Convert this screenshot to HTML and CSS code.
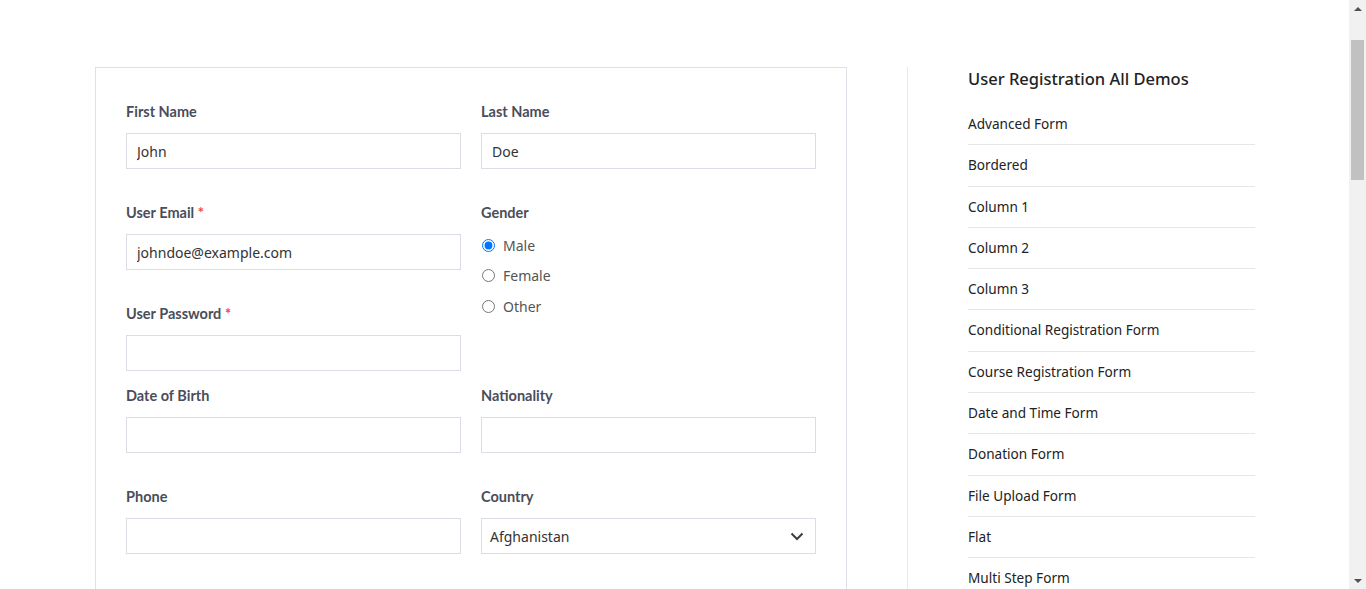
FILE: index.html
```html
<!DOCTYPE html>
<html lang="en">
<head>
<meta charset="utf-8">
<title>User Registration</title>
<link rel="stylesheet" href="styles.css">
</head>
<body>
<div class="page">
  <form class="reg-form">
    <div class="row">
      <div class="field">
        <label class="lbl">First Name</label>
        <input class="inp" type="text" value="John">
      </div>
      <div class="field">
        <label class="lbl">Last Name</label>
        <input class="inp" type="text" value="Doe">
      </div>
    </div>
    <div class="row row-tight">
      <div class="col">
        <div class="field field-gap">
          <label class="lbl">User Email <span class="req">*</span></label>
          <input class="inp" type="text" value="johndoe@example.com">
        </div>
        <div class="field">
          <label class="lbl">User Password <span class="req">*</span></label>
          <input class="inp" type="password" value="">
        </div>
      </div>
      <div class="field">
        <label class="lbl">Gender</label>
        <div class="radios">
          <label class="radio"><input type="radio" name="g" checked><span>Male</span></label>
          <label class="radio"><input type="radio" name="g"><span>Female</span></label>
          <label class="radio"><input type="radio" name="g"><span>Other</span></label>
        </div>
      </div>
    </div>
    <div class="row">
      <div class="field">
        <label class="lbl">Date of Birth</label>
        <input class="inp" type="text" value="">
      </div>
      <div class="field">
        <label class="lbl">Nationality</label>
        <input class="inp" type="text" value="">
      </div>
    </div>
    <div class="row">
      <div class="field">
        <label class="lbl">Phone</label>
        <input class="inp" type="text" value="">
      </div>
      <div class="field">
        <label class="lbl">Country</label>
        <div class="select">
          <span>Afghanistan</span>
          <svg class="chev" width="14" height="9" viewBox="0 0 14 9"><path d="M1.5 1.5 L7 7 L12.5 1.5" fill="none" stroke="#3d3d3d" stroke-width="2"/></svg>
        </div>
      </div>
    </div>
  </form>
  <aside class="sidebar">
    <h3 class="side-title">User Registration All Demos</h3>
    <ul class="demos">
      <li>Advanced Form</li>
      <li>Bordered</li>
      <li>Column 1</li>
      <li>Column 2</li>
      <li>Column 3</li>
      <li>Conditional Registration Form</li>
      <li>Course Registration Form</li>
      <li>Date and Time Form</li>
      <li>Donation Form</li>
      <li>File Upload Form</li>
      <li>Flat</li>
      <li>Multi Step Form</li>
      <li>Profile Picture Form</li>
    </ul>
  </aside>
</div>
<div class="scrollbar" aria-hidden="true">
  <div class="sb-arrow sb-up"></div>
  <div class="sb-track"><div class="sb-thumb"></div></div>
  <div class="sb-arrow sb-down"></div>
</div>
</body>
</html>
```
FILE: styles.css
```css
html, body {
  margin: 0;
  padding: 0;
  background: #ffffff;
}
body {
  font-family: "Noto Sans", "Open Sans", sans-serif;
  color: #222;
}
.page {
  display: flex;
  align-items: flex-start;
  padding: 67px 0 200px 95px;
}
.reg-form {
  width: 690px;
  border: 1px solid #e0e0e9;
  padding: 33px 30px 260px 30px;
  flex: none;
}
.row {
  display: grid;
  grid-template-columns: 335px 335px;
  column-gap: 20px;
  margin-bottom: 33px;
}
.row-tight {
  margin-bottom: 14px;
}
.field {
  display: flex;
  flex-direction: column;
}
.field-gap {
  margin-bottom: 33px;
}
.lbl {
  font-family: Lato, "Noto Sans", sans-serif;
  font-weight: 700;
  font-size: 14.5px;
  line-height: 20px;
  color: #4a4d5a;
  padding-top: 1px;
  margin-bottom: 11px;
}
.req {
  color: #f0424f;
}
.inp {
  box-sizing: border-box;
  height: 36px;
  width: 100%;
  border: 1px solid #dcdce4;
  border-radius: 0;
  padding: 0 11px 0 10px;
  font-family: "Noto Sans", sans-serif;
  font-size: 14px;
  color: #333;
  background: #fff;
  outline: none;
  margin: 0;
}
.radios {
  display: flex;
  flex-direction: column;
  gap: 10.5px;
  margin-top: 1px;
}
.radio {
  display: flex;
  align-items: center;
  height: 20px;
  font-size: 14px;
  color: #555;
}
.radio input {
  margin: 0 8px 0 1px;
  width: 13px;
  height: 13px;
}
.select {
  box-sizing: border-box;
  height: 36px;
  border: 1px solid #dcdce4;
  display: flex;
  align-items: center;
  justify-content: space-between;
  padding: 0 11px 0 8px;
  font-size: 14px;
  color: #333;
}
.chev {
  display: block;
}
.sidebar {
  margin-left: 60px;
  border-left: 1px solid #e8e8e8;
  padding-left: 60px;
  width: 287px;
  flex: none;
  min-height: 600px;
}
.side-title {
  margin: 0 0 13px;
  font-size: 16.5px;
  font-weight: 500;
  line-height: 24px;
  color: #222;
}
.demos {
  list-style: none;
  margin: 0;
  padding: 0;
}
.demos li {
  font-size: 13.6px;
  line-height: 20px;
  padding: 10px 0 10.3px;
  border-bottom: 1px solid #e6e6ea;
  color: #222;
}
.scrollbar {
  position: fixed;
  top: 0;
  right: 0;
  width: 17px;
  height: 100vh;
  background: #f1f1f1;
  display: flex;
  flex-direction: column;
}
.sb-arrow {
  height: 17px;
  flex: none;
  display: flex;
  align-items: center;
  justify-content: center;
}
.sb-up::before {
  content: "";
  border-left: 4px solid transparent;
  border-right: 4px solid transparent;
  border-bottom: 4px solid #505050;
}
.sb-down::before {
  content: "";
  border-left: 4px solid transparent;
  border-right: 4px solid transparent;
  border-top: 4px solid #505050;
}
.sb-track {
  flex: 1;
  padding: 23px 2px 0;
}
.sb-thumb {
  height: 140px;
  background: #c1c1c1;
}
```
